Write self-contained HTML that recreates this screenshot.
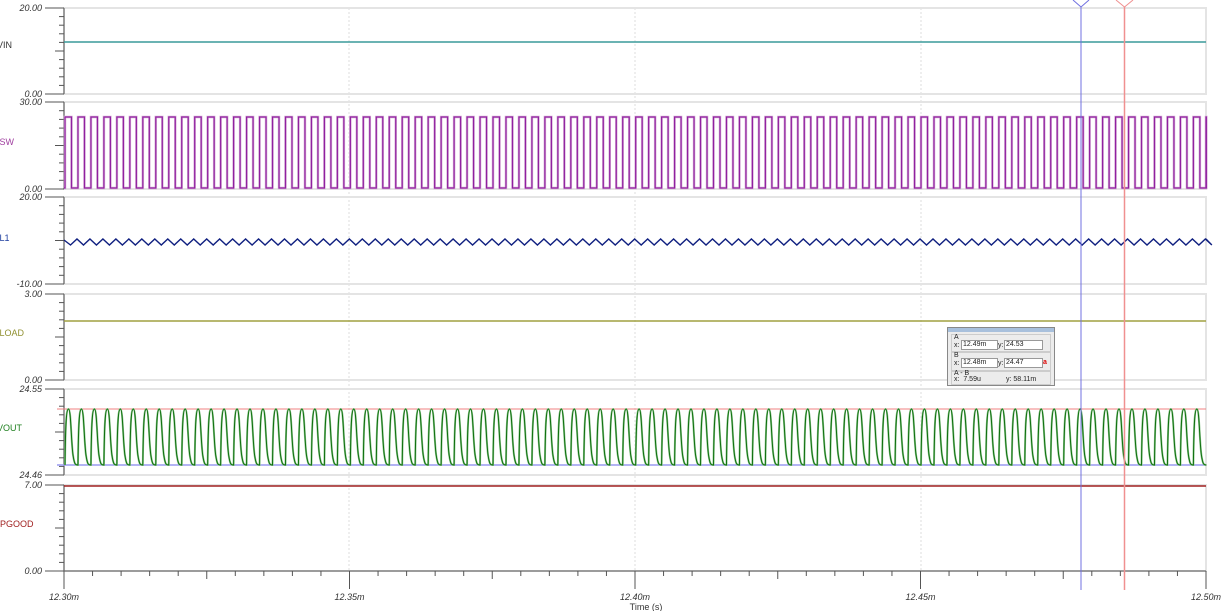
<!DOCTYPE html>
<html><head><meta charset="utf-8"><style>
html,body{margin:0;padding:0;background:#fff;width:1230px;height:611px;overflow:hidden}
svg{position:absolute;left:0;top:0}
text{font-family:"Liberation Sans",sans-serif;font-size:9px}
.lab{font-style:italic;fill:#333}
.box{position:absolute;left:947px;top:327px;width:106px;height:57px;background:#ececec;border:1px solid #888;font-family:"Liberation Sans",sans-serif;font-size:7px;color:#222}
.box .bar{height:4px;background:#a8c0dc}
.grp{position:absolute;border:1px solid #ccc;left:3px;width:98px}
.inp{position:absolute;background:#fff;border:1px solid #999;height:8px;line-height:8px;font-size:7px;padding-left:1px}
</style></head><body>
<svg id="s" width="1230" height="611" xmlns="http://www.w3.org/2000/svg"></svg>
<div class="box"><div class="bar"></div>
<div class="grp" style="top:6px;height:16px"><span style="position:absolute;left:2px;top:-1px">A</span><span style="position:absolute;left:2px;top:7px">x:</span><div class="inp" style="left:9px;top:5px;width:34px">12.49m</div><span style="position:absolute;left:46px;top:7px">y:</span><div class="inp" style="left:52px;top:5px;width:36px">24.53</div></div>
<div class="grp" style="top:24px;height:17px"><span style="position:absolute;left:2px;top:-1px">B</span><span style="position:absolute;left:2px;top:7px">x:</span><div class="inp" style="left:9px;top:5px;width:34px">12.48m</div><span style="position:absolute;left:46px;top:7px">y:</span><div class="inp" style="left:52px;top:5px;width:36px">24.47</div><span style="position:absolute;left:91px;top:6px;color:#d00;font-weight:bold">a</span></div>
<div class="grp" style="top:43px;height:12px"><span style="position:absolute;left:2px;top:-2px">A - B</span><span style="position:absolute;left:2px;top:4px">x: &nbsp;7.59u</span><span style="position:absolute;left:54px;top:4px">y: 58.11m</span></div>
</div>
<script>
var s=document.getElementById('s'),h='';
var X0=64,X1=1206;
var panels=[[8,94,'20.00','0.00','VIN','#333',-3,48],[102,189,'30.00','0.00','ISW','#a040a0',-3,145],[197,284,'20.00','-10.00','IL1','#2040a0',-3,241],[294,380,'3.00','0.00','ILOAD','#909030',-3,336],[389,475,'24.55','24.46','VOUT','#208020',-3,431],[485,571,'7.00','0.00','VPGOOD','#a02020',-6,527]];
[349,635,921].forEach(function(x){h+='<line x1="'+x+'" y1="8" x2="'+x+'" y2="571" stroke="#ddd" stroke-dasharray="2,2"/>';});
panels.forEach(function(p){
 var t=p[0],b=p[1];
 h+='<rect x="'+X0+'" y="'+t+'" width="'+(X1-X0)+'" height="'+(b-t)+'" fill="none" stroke="#e4e4e4" stroke-width="2"/>';
 h+='<line x1="64" y1="'+t+'" x2="64" y2="'+b+'" stroke="#555"/>';
 h+='<line x1="45" y1="'+t+'" x2="64" y2="'+t+'" stroke="#555"/><line x1="45" y1="'+b+'" x2="64" y2="'+b+'" stroke="#555"/>';
 for(var i=1;i<10;i++){var y=t+(b-t)*i/10;h+='<line x1="'+(i==5?55:59)+'" y1="'+y+'" x2="64" y2="'+y+'" stroke="#555"/>';}
 h+='<text class="lab" x="42" y="'+(t+3)+'" text-anchor="end">'+p[2]+'</text><text class="lab" x="42" y="'+(b+3)+'" text-anchor="end">'+p[3]+'</text>';
 h+='<text x="'+p[6]+'" y="'+p[7]+'" style="fill:'+p[5]+'">'+p[4]+'</text>';
});
var P=12.97;
h+='<line x1="64" y1="42" x2="1206" y2="42" stroke="#3a9a9a" stroke-width="1.5"/>';
var d='M64,188';for(var x=64;x<1206;x+=P){var a=x+1,b2=Math.min(x+7.5,1206);d+=' L'+a+',188 L'+a+',117 L'+b2+',117 L'+b2+',188 L'+Math.min(x+P,1206)+',188';}
h+='<path d="'+d+'" fill="none" stroke="#d8b0d8" stroke-width="2.5"/><path d="'+d+'" fill="none" stroke="#9020a0" stroke-width="1.2"/>';
d='M64,240';for(var x=64;x<1206;x+=P){d+=' L'+(x+6.5)+',245 L'+Math.min(x+P,1206)+',239';}
h+='<path d="'+d+'" fill="none" stroke="#102080" stroke-width="1.4"/>';
h+='<line x1="64" y1="321" x2="1206" y2="321" stroke="#a0a040" stroke-width="1.5"/>';
h+='<line x1="57" y1="409" x2="1206" y2="409" stroke="#f08080"/><line x1="57" y1="465" x2="1206" y2="465" stroke="#9a9af0" stroke-width="1.5"/>';
d='M65,465';for(var x=65;x<1206;x+=P){d+=' C'+(x+0.5)+',420 '+(x+1.5)+',409 '+(x+3.5)+',409 C'+(x+6)+',409 '+(x+6)+',440 '+(x+8)+',455 C'+(x+9.5)+',465 '+(x+10.5)+',465 '+(x+P)+',465';}
h+='<path d="'+d+'" fill="none" stroke="#90c890" stroke-width="2"/><path d="'+d+'" fill="none" stroke="#107010" stroke-width="1"/>';
h+='<line x1="64" y1="486" x2="1206" y2="486" stroke="#a02020" stroke-width="1.5"/>';
h+='<line x1="64" y1="571" x2="1206" y2="571" stroke="#555"/>';
for(var i=0;i<=40;i++){var x=64+(X1-X0)*i/40;var L=i%10==0?18:(i%5==0?8:5);h+='<line x1="'+x+'" y1="571" x2="'+x+'" y2="'+(571+L)+'" stroke="#555"/>';}
['12.30m','12.35m','12.40m','12.45m','12.50m'].forEach(function(l,i){h+='<text class="lab" x="'+(64+285.5*i)+'" y="600" text-anchor="middle">'+l+'</text>';});
h+='<text x="646" y="610" text-anchor="middle" style="fill:#333">Time (s)</text>';
h+='<line x1="1081" y1="7" x2="1081" y2="590" stroke="#7070e0"/><path d="M1073,0 L1081,7 L1089,0" fill="none" stroke="#7070e0"/>';
h+='<line x1="1124.5" y1="7" x2="1124.5" y2="590" stroke="#f09090" stroke-width="1.5"/><path d="M1116,0 L1124.5,7 L1133,0" fill="none" stroke="#f09090"/>';
s.innerHTML=h;
</script>
</body></html>
